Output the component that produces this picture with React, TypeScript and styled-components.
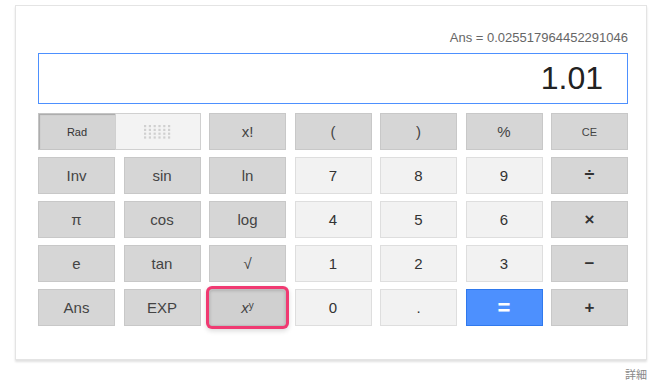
import styled, { createGlobalStyle, css } from 'styled-components';

const GlobalStyle = createGlobalStyle`
  body {
    margin: 0;
    background: #fff;
    font-family: "Liberation Sans", Arial, sans-serif;
  }
`;

const Page = styled.div`
  width: 656px;
  height: 386px;
  position: relative;
  overflow: hidden;
`;

const Card = styled.div`
  box-sizing: border-box;
  margin: 5px 0 0 15px;
  width: 632px;
  height: 355px;
  border: 1px solid #e4e4e4;
  box-shadow: 0 2px 2px rgba(0, 0, 0, 0.12);
  padding: 21px 19px 0 22px;
`;

const AnsLine = styled.div`
  width: 590px;
  text-align: right;
  font-size: 13px;
  line-height: 22px;
  color: #666;
`;

const Display = styled.div`
  box-sizing: border-box;
  width: 590px;
  height: 51px;
  border: 1px solid #4d90fe;
  margin-top: 4px;
  padding-right: 24px;
  text-align: right;
  font-size: 32px;
  line-height: 48px;
  color: #222;
`;

const Keys = styled.div`
  display: grid;
  width: 590px;
  margin-top: 9px;
  grid-template-columns: repeat(7, 1fr);
  grid-auto-rows: 37px;
  column-gap: 8.5px;
  row-gap: 7px;
`;

type Tone = 'op' | 'num' | 'eq';

const Key = styled.div<{ $tone?: Tone; $small?: boolean; $marked?: boolean }>`
  box-sizing: border-box;
  display: flex;
  align-items: center;
  justify-content: center;
  font-size: ${p => (p.$small ? '11px' : '15px')};
  color: #444;
  border: 1px solid #c8c8c8;
  background: #d6d6d6;
  user-select: none;
  ${p =>
    p.$tone === 'num' &&
    css`
      background: #f2f2f2;
      border-color: #dedede;
      color: #333;
    `}
  ${p =>
    p.$tone === 'eq' &&
    css`
      background: #4d90fe;
      border-color: #3079ed;
      color: #fff;
      font-size: 22px;
      font-weight: bold;
    `}
  ${p =>
    p.$marked &&
    css`
      background: #d0d0d0;
      border-color: #bdbdbd;
      border-radius: 3px;
      box-shadow: inset 0 1px 3px rgba(0, 0, 0, 0.15), 0 0 0 3px #f03a72,
        0 2px 5px 3px rgba(0, 0, 0, 0.15);
    `}
  sup {
    font-size: 10px;
    position: relative;
    top: -2px;
  }
  i {
    font-size: 15px;
  }
`;

const Strong = styled.span<{ $size?: number }>`
  font-weight: bold;
  font-size: ${p => p.$size ?? 17}px;
  color: #333;
`;

const Toggle = styled.div`
  grid-column: span 2;
  display: flex;
`;

const RadHalf = styled.div`
  box-sizing: border-box;
  width: 77px;
  display: flex;
  align-items: center;
  justify-content: center;
  font-size: 11px;
  color: #333;
  background: #d4d4d4;
  border: 1px solid #c4c4c4;
  border-right: none;
  box-shadow: inset 1px 1px 1px rgba(0, 0, 0, 0.2);
`;

const DegHalf = styled.div`
  box-sizing: border-box;
  flex: 1;
  display: flex;
  align-items: center;
  justify-content: center;
  background: #f3f3f3;
  border: 1px solid #d0d0d0;
`;

const Detail = styled.div`
  position: absolute;
  right: 9px;
  top: 366px;
  font-family: "Noto Sans CJK JP", sans-serif;
  font-size: 11px;
  color: #888;
`;

const Dots = () => {
  const dots = [];
  for (let r = 0; r < 4; r++) {
    for (let c = 0; c < 6; c++) {
      dots.push(<rect key={`${r}-${c}`} x={c * 4.8} y={r * 3.8} width={2.2} height={2.2} fill="#d0d0d0" />);
    }
  }
  return (
    <svg width="27" height="14" viewBox="0 0 27 14">
      {dots}
    </svg>
  );
};

const App = () => (
  <Page>
    <GlobalStyle />
    <Card>
      <AnsLine>Ans = 0.025517964452291046</AnsLine>
      <Display>1.01</Display>
      <Keys>
        <Toggle>
          <RadHalf>Rad</RadHalf>
          <DegHalf>
            <Dots />
          </DegHalf>
        </Toggle>
        <Key>x!</Key>
        <Key>(</Key>
        <Key>)</Key>
        <Key>%</Key>
        <Key $small>CE</Key>

        <Key>Inv</Key>
        <Key>sin</Key>
        <Key>ln</Key>
        <Key $tone="num">7</Key>
        <Key $tone="num">8</Key>
        <Key $tone="num">9</Key>
        <Key><Strong $size={18}>÷</Strong></Key>

        <Key>π</Key>
        <Key>cos</Key>
        <Key>log</Key>
        <Key $tone="num">4</Key>
        <Key $tone="num">5</Key>
        <Key $tone="num">6</Key>
        <Key><Strong>×</Strong></Key>

        <Key>e</Key>
        <Key>tan</Key>
        <Key>√</Key>
        <Key $tone="num">1</Key>
        <Key $tone="num">2</Key>
        <Key $tone="num">3</Key>
        <Key><Strong>−</Strong></Key>

        <Key>Ans</Key>
        <Key>EXP</Key>
        <Key $marked>
          <i>x</i>
          <sup>y</sup>
        </Key>
        <Key $tone="num">0</Key>
        <Key $tone="num">.</Key>
        <Key $tone="eq">=</Key>
        <Key><Strong>+</Strong></Key>
      </Keys>
    </Card>
    <Detail>詳細</Detail>
  </Page>
);

export default App;
